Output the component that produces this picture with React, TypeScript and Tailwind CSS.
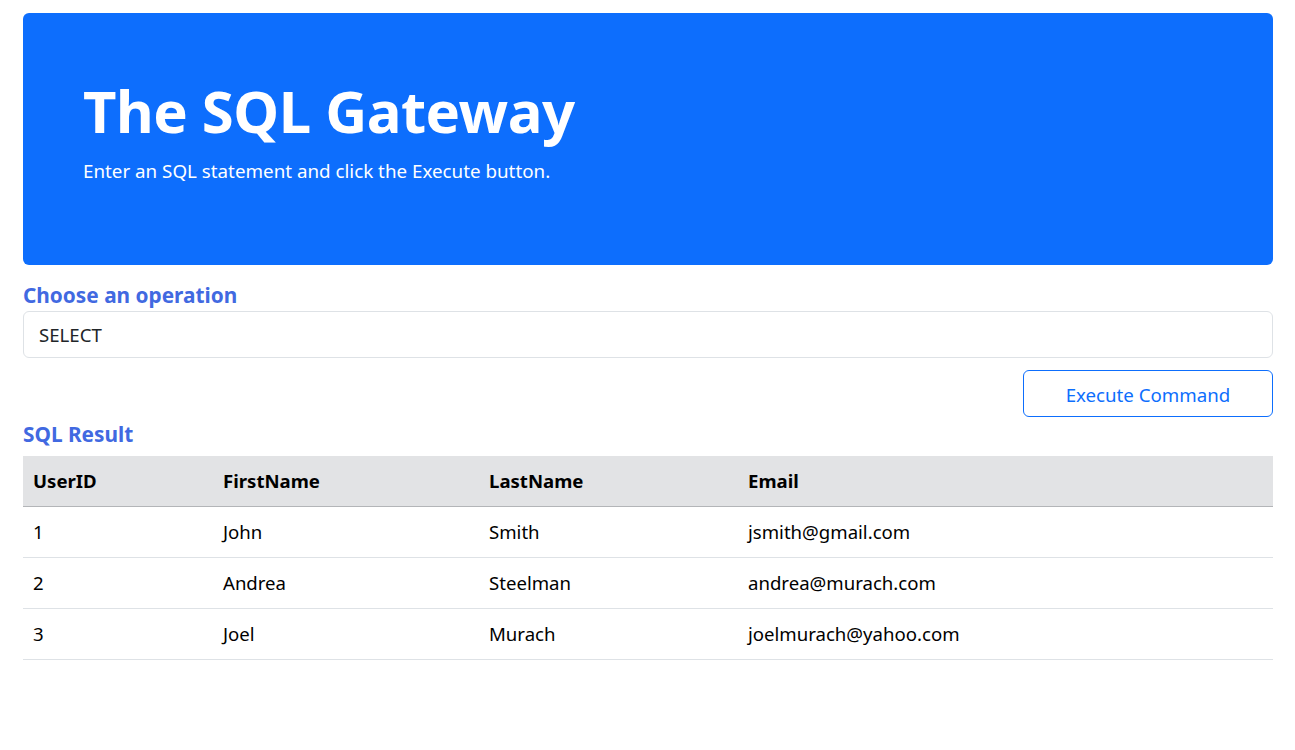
import React from 'react';

const rows = [
  { id: 1, first: 'John', last: 'Smith', email: 'jsmith@gmail.com' },
  { id: 2, first: 'Andrea', last: 'Steelman', email: 'andrea@murach.com' },
  { id: 3, first: 'Joel', last: 'Murach', email: 'joelmurach@yahoo.com' },
];

const App: React.FC = () => {
  return (
    <div className="min-h-[750px] bg-white pl-[23px] pr-[22px] pt-[13px] text-black" style={{ fontFamily: "'Noto Sans', 'Open Sans', sans-serif" }}>
      {/* Header */}
      <div className="h-[252px] rounded-md bg-[#0d6efd] px-[60px] pt-[63px] text-white">
        <h1 className="text-[58px] font-bold leading-[1.2] tracking-[-0.5px]">The SQL Gateway</h1>
        <p className="mt-[11px] text-[18.8px] leading-[1.5]">Enter an SQL statement and click the Execute button.</p>
      </div>

      {/* Form */}
      <div className="mt-[17px]">
        <label className="block text-[20.8px] font-bold leading-[26px] text-[#4169e1]">Choose an operation</label>
        <div className="mt-[3px] flex h-[47px] items-center rounded-md border border-[#dee2e6] px-[15px] text-[18.6px] text-[#212529]">
          SELECT
        </div>
        <div className="mt-[12px] flex justify-end">
          <button className="h-[47px] w-[250px] rounded-md border border-[#0d6efd] pt-[3px] text-[18.7px] text-[#0d6efd]">
            Execute Command
          </button>
        </div>
      </div>

      {/* Result */}
      <h2 className="mt-[2px] text-[20.8px] font-bold leading-[30px] text-[#4169e1]">SQL Result</h2>
      <table className="mt-[7px] w-full border-collapse text-left text-[18.6px]">
        <thead>
          <tr className="h-[50px] border-b border-[#b3b5b8] bg-[#e2e3e5]">
            <th className="w-[190px] px-[10px] font-bold">UserID</th>
            <th className="w-[266px] px-[10px] font-bold">FirstName</th>
            <th className="w-[259px] px-[10px] font-bold">LastName</th>
            <th className="px-[10px] font-bold">Email</th>
          </tr>
        </thead>
        <tbody>
          {rows.map((r) => (
            <tr key={r.id} className="h-[51px] border-b border-[#dee2e6]">
              <td className="px-[10px]">{r.id}</td>
              <td className="px-[10px]">{r.first}</td>
              <td className="px-[10px]">{r.last}</td>
              <td className="px-[10px]">{r.email}</td>
            </tr>
          ))}
        </tbody>
      </table>
    </div>
  );
};

export default App;
